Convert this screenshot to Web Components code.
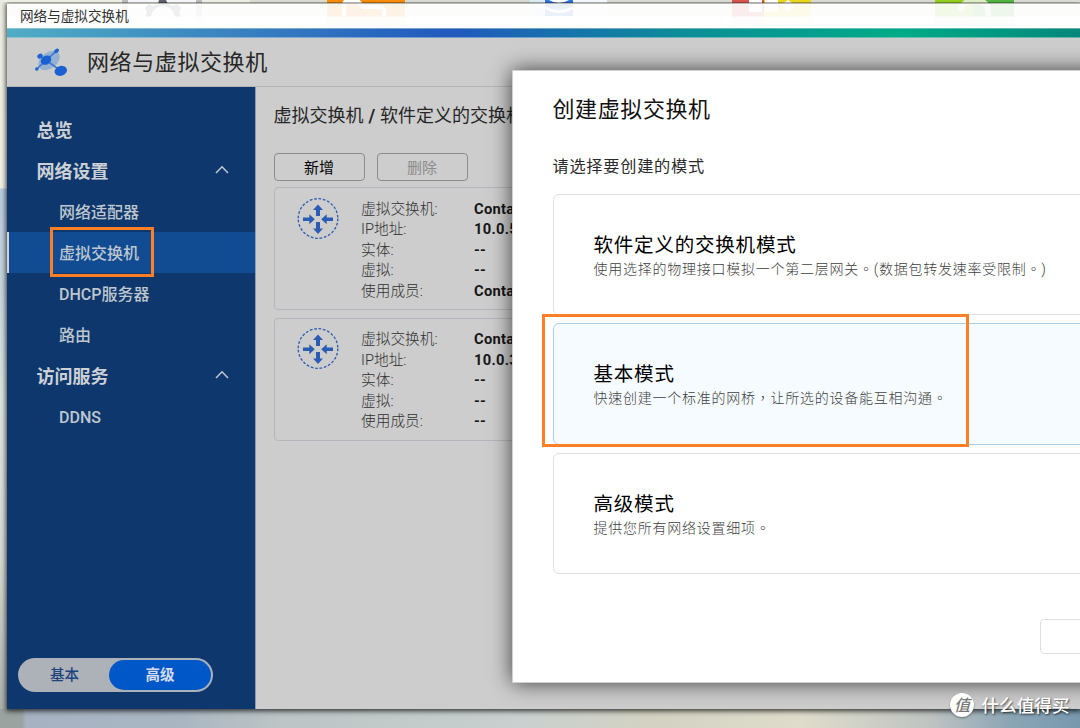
<!DOCTYPE html>
<html lang="zh-CN">
<head>
<meta charset="utf-8">
<title>网络与虚拟交换机</title>
<style>
  html, body {
    margin: 0;
    width: 1080px;
    height: 728px;
    overflow: hidden;
  }

  body {
    font-family: Roboto, "Noto Sans CJK SC", sans-serif;
  }
</style>
</head>
<body>
<nas-desktop>
  <app-window heading="网络与虚拟交换机">
    <side-nav slot="nav">
      <nav-item level="1">总览</nav-item>
      <nav-item level="1" open>网络设置</nav-item>
      <nav-item>网络适配器</nav-item>
      <nav-item active>虚拟交换机</nav-item>
      <nav-item>DHCP服务器</nav-item>
      <nav-item>路由</nav-item>
      <nav-item level="1" open>访问服务</nav-item>
      <nav-item>DDNS</nav-item>
      <mode-toggle slot="footer"></mode-toggle>
    </side-nav>
    <switch-list>
      <ui-button slot="actions">新增</ui-button>
      <ui-button slot="actions" disabled>删除</ui-button>
      <switch-card name="Container" ip="10.0.5.1" member="Container"></switch-card>
      <switch-card name="Container" ip="10.0.3.1" member="--"></switch-card>
    </switch-list>
  </app-window>
  <create-dialog lang="zh-TW" heading="创建虚拟交换机" hint="请选择要创建的模式">
    <mode-card heading="软件定义的交换机模式">使用选择的物理接口模拟一个第二层网关。(数据包转发速率受限制。)</mode-card>
    <mode-card heading="基本模式" selected>快速创建一个标准的网桥，让所选的设备能互相沟通。</mode-card>
    <mode-card heading="高级模式">提供您所有网络设置细项。</mode-card>
  </create-dialog>
  <mark-box style="left:50px;top:227px;width:104px;height:50px"></mark-box>
  <mark-box style="left:542px;top:314px;width:427px;height:133px"></mark-box>
  <site-badge></site-badge>
</nas-desktop>

<script>
// small helper: every element renders its template once into an open root
class BaseElement extends HTMLElement {
  constructor() {
    super();
    this.attachShadow({ mode: "open" });
  }

  connectedCallback() {
    this.shadowRoot.innerHTML = this.render();
  }

  attr(name) {
    return this.getAttribute(name) || "";
  }
}

class NasDesktop extends BaseElement {
  render() {
    return `
      <style>
        :host {
          display: block;
          position: relative;
          box-sizing: border-box;
          width: 1080px;
          height: 728px;
          padding: 3px 0 19px 7px;
          overflow: hidden;
          background:
            linear-gradient(90deg, #9aa39f 0, #9aa39f 22px, #a6b2c2 26px, #a9b6c2 180px, #bcc4c5 280px, #c9d0cf 520px, #d3d2c2 650px, #dfdccb 800px, #bfc4c2 930px, #8ba5b5 1010px, #7898ae 1080px) 0 709px / 100% 19px no-repeat,
            linear-gradient(180deg, #ecece2 0, #f1f1e7 188px, #b9cce0 189px, #c6d4de 280px, #dbe5e2 400px, #d2dbd4 560px, #a9b3ac 709px);
        }

        .icons {
          position: absolute;
          left: 0;
          top: 0;
        }
      </style>
      <svg class="icons" width="1080" height="30" viewBox="0 0 1080 30">
        <rect x="250" width="830" height="4" fill="#d9dbd3"/>
        <g>
          <rect x="122" width="80" height="28" fill="#b9bbbb"/>
          <rect x="128" width="68" height="28" fill="#f5f6f7"/>
          <path d="M159 0h7l2 4 5 2 4-2 4 4-2 5 2 3-6 2a11 11 0 0 0-24 0l-6-2 2-3-2-5 4-4 4 2 5-2z" fill="#5a606b"/>
        </g>
        <rect x="327" width="78" height="26" fill="#f78b0b"/>
        <path d="M344 16V5q0-4 4-4h10l5 6h17q4 0 4 4v5" fill="none" stroke="#fff" stroke-width="4"/>
        <rect x="530" width="77" height="26" fill="#f4f8fd"/>
        <rect x="530" width="14" height="26" fill="#d8ebf1"/>
        <path d="M545 0h28v16h-28z" fill="#2f73e0"/>
        <path d="M549 0h20q-10 6-20 0zM545 6q14 8 28 0v3q-14 8-28 0z" fill="#fff"/>
        <rect x="732" width="32" height="24" fill="#d9534f"/>
        <rect x="764" width="47" height="24" fill="#ead61c"/>
        <path d="M749 0h13v12h-13zM765 0h13v12h-13zM781 5l7-5 7 5-7 8z" fill="#fff"/>
        <rect x="935" width="38" height="24" fill="#94ce1c"/>
        <rect x="973" width="41" height="24" fill="#51b441"/>
        <path d="M960 11q4-11 16-11 14 2 12 16" fill="none" stroke="#dcedc8" stroke-width="6"/>
      </svg>
      <slot></slot>`;
  }
}

class AppWindow extends BaseElement {
  render() {
    return `
      <style>
        :host {
          position: relative;
          display: flex;
          flex-direction: column;
          box-sizing: border-box;
          height: 706px;
          box-shadow: 0 1px 5px 1px rgba(0, 0, 0, .75);
          clip-path: inset(-1px -10px -20px -10px);
        }

        .title {
          box-sizing: border-box;
          height: 25px;
          padding-left: 13px;
          border-top: 1px solid #b9b9b4;
          font-size: 13.6px;
          line-height: 25px;
          color: #303030;
          background: linear-gradient(180deg, rgba(254, 254, 254, .9) 0, rgba(254, 254, 254, .9) 12px, rgba(255, 255, 255, .985) 13px);
        }

        .stripe {
          box-sizing: border-box;
          height: 10px;
          border: solid rgba(205, 220, 225, .5);
          border-width: 1px 0;
          background: linear-gradient(90deg, #50adc4 0, #2159bd 445px, #0b9096 690px, #00ab87 893px, #00877b 1073px) border-box;
        }

        header {
          display: flex;
          align-items: center;
          box-sizing: border-box;
          height: 49px;
          padding-left: 26px;
          border-bottom: 1px solid #b3b3b3;
          background: #cdcdcd;
        }

        h1 {
          margin: 2px 0 0 18px;
          font-size: 22px;
          font-weight: 400;
          letter-spacing: .6px;
          line-height: 46px;
          color: #262626;
        }

        .body {
          display: flex;
          flex: 1;
          min-height: 0;
          background: #cdcdcd;
        }
      </style>
      <div class="title">${this.attr("heading")}</div>
      <div class="stripe"></div>
      <header>
        <svg width="36" height="30" viewBox="0 0 36 30">
          <ellipse cx="16" cy="13.500" rx="12" ry="8" transform="rotate(-38 16 13.500)" fill="#94b0d2"/>
          <path d="M23.700 3.700L3.700 22M7 9l6 4 15 11" fill="none" stroke="#3f79d0" stroke-width="1.600"/>
          <ellipse cx="13" cy="13.200" rx="5.600" ry="4.300" transform="rotate(-30 13 13.200)" fill="#1a60d2"/>
          <ellipse cx="7" cy="9.200" rx="2.900" ry="2.300" transform="rotate(-35 7 9.200)" fill="#1f63d2"/>
          <ellipse cx="23.600" cy="3.900" rx="2.700" ry="1.900" transform="rotate(-35 23.600 3.900)" fill="#1f63d2"/>
          <circle cx="3.800" cy="22" r="1.800" fill="#1f63d2"/>
          <ellipse cx="27.800" cy="23.900" rx="6.300" ry="4.900" transform="rotate(-18 27.800 23.900)" fill="#1a60d2"/>
        </svg>
        <h1>${this.attr("heading")}</h1>
      </header>
      <div class="body">
        <slot name="nav"></slot>
        <slot></slot>
      </div>`;
  }
}

class SideNav extends BaseElement {
  render() {
    return `
      <style>
        :host {
          display: flex;
          flex-direction: column;
          justify-content: space-between;
          box-sizing: border-box;
          width: 249px;
          padding: 22px 0 17px;
          border-right: 1px solid #8b9bb3;
          background: #0e386d;
        }
      </style>
      <nav><slot></slot></nav>
      <slot name="footer"></slot>`;
  }
}

class NavItem extends BaseElement {
  render() {
    const arrow = this.hasAttribute("open")
      ? `<svg width="14" height="9" viewBox="0 0 14 9"><path d="M1 8l6-6.200L13 8" fill="none" stroke="#c3cad3" stroke-width="1.500"/></svg>`
      : "";
    return `
      <style>
        :host {
          display: flex;
          align-items: center;
          justify-content: space-between;
          box-sizing: border-box;
          height: 41px;
          padding: 2px 26px 0 52px;
          font-size: 16px;
          font-weight: 500;
          line-height: 39px;
          color: #bfc6ce;
        }

        :host([level="1"]) {
          padding-left: 29.500px;
          font-size: 18px;
          font-weight: 600;
          color: #cdd0d4;
        }

        :host([active]) {
          border-left: 2px solid #cfd3d8;
          padding-left: 50px;
          background: #114c93;
        }

        svg {
          margin-bottom: 4px;
        }
      </style>
      <span><slot></slot></span>${arrow}`;
  }
}

class ModeToggle extends BaseElement {
  render() {
    return `
      <style>
        :host {
          display: flex;
          box-sizing: border-box;
          width: 195px;
          height: 34px;
          margin-left: 11px;
          padding: 2px;
          border-radius: 17px;
          background: #adb1b8;
          font-size: 14.500px;
          line-height: 32px;
          text-align: center;
        }

        span {
          flex: 1;
          height: 30px;
          color: #1b447c;
          font-weight: 500;
        }

        .on {
          flex: 0 0 102px;
          border-radius: 15px;
          background: #0057c8;
          color: #d4dcea;
          font-weight: 600;
        }
      </style>
      <span>基本</span><span class="on">高级</span>`;
  }
}

class UiButton extends BaseElement {
  render() {
    return `
      <style>
        :host {
          display: block;
          box-sizing: border-box;
          width: 91px;
          height: 28px;
          border: 1px solid #8c8c8c;
          border-radius: 4px;
          font-size: 15px;
          line-height: 28px;
          text-align: center;
          color: #000;
        }

        :host([disabled]) {
          color: #8c8c8c;
        }
      </style>
      <slot></slot>`;
  }
}

class SwitchList extends BaseElement {
  render() {
    return `
      <style>
        :host {
          display: block;
          flex: 1;
          padding: 14px 0 0 17.500px;
          background: #cdcdcd;
        }

        h2 {
          margin: 0;
          font-size: 18px;
          font-weight: 400;
          line-height: 30px;
          white-space: nowrap;
          color: #262626;
        }

        b {
          margin: 0 .5px;
          font-weight: 700;
        }

        .actions {
          display: flex;
          gap: 12px;
          margin: 22px 0 6px;
        }

        .cards {
          display: flex;
          flex-direction: column;
          gap: 7.500px;
        }
      </style>
      <h2>虚拟交换机 <b>/</b> 软件定义的交换机</h2>
      <div class="actions"><slot name="actions"></slot></div>
      <div class="cards"><slot></slot></div>`;
  }
}

class SwitchCard extends BaseElement {
  render() {
    const rows = [
      ["虚拟交换机:", this.attr("name")],
      ["IP地址:", this.attr("ip")],
      ["实体:", "--"],
      ["虚拟:", "--"],
      ["使用成员:", this.attr("member")]
    ];
    return `
      <style>
        :host {
          display: flex;
          align-items: flex-start;
          box-sizing: border-box;
          width: 700px;
          height: 123px;
          padding: 9.500px 0 0 22px;
          border: 1px solid #b5b6bd;
          border-radius: 4px;
        }

        svg {
          flex: none;
          margin-right: 22.500px;
        }

        dl {
          display: grid;
          grid-template-columns: 113px auto;
          grid-auto-rows: 20.600px;
          margin: 1px 0 0;
          font-size: 14.700px;
          line-height: 21px;
        }

        dt {
          font-weight: 300;
          color: #303030;
        }

        dd {
          margin: 0;
          font-weight: 700;
          letter-spacing: .3px;
          color: #161616;
        }
      </style>
      <svg width="42" height="42" viewBox="0 0 42 42" fill="#2b5cb4">
        <circle cx="21" cy="20.500" r="19.800" fill="none" stroke="#2b5cb4" stroke-width="1.300" stroke-dasharray="2.700 1.740"/>
        <path d="M21 6.500l5 5.500h-3v6h-4v-6h-3z"/>
        <path d="M21 36l5-5.500h-3v-6.500h-4v6.500h-3z"/>
        <path d="M17.800 21.300l-5.500-5v3.200h-6.300v3.600h6.300v3.200z"/>
        <path d="M24.200 21.300l5.500-5v3.200h6.300v3.600h-6.300v3.200z"/>
      </svg>
      <dl>${rows.map(([k, v]) => `<dt>${k}</dt><dd>${v}</dd>`).join("")}</dl>`;
  }
}

class CreateDialog extends BaseElement {
  render() {
    return `
      <style>
        :host {
          position: absolute;
          left: 512px;
          top: 70px;
          display: flex;
          flex-direction: column;
          box-sizing: border-box;
          width: 700px;
          height: 613px;
          padding: 21px 0 28px 39.500px;
          border: 1px solid #d0d0d0;
          background: #fff;
          box-shadow: 0 0 20px rgba(0, 0, 0, .7);
          font-family: Roboto, "Noto Sans CJK TC", sans-serif;
        }

        h2 {
          margin: 0;
          font-size: 22px;
          font-weight: 400;
          letter-spacing: .6px;
          line-height: 36px;
          color: #111;
        }

        p {
          margin: 27px 0 15px;
          font-size: 16.200px;
          letter-spacing: .75px;
          line-height: 24px;
          color: #2b2b2b;
        }

        .modes {
          display: flex;
          flex-direction: column;
          gap: 8px;
          flex: 1;
        }

        .cancel {
          box-sizing: border-box;
          width: 110px;
          height: 35px;
          margin-left: 487.500px;
          border: 1px solid #dcdfe6;
          border-radius: 4px;
        }
      </style>
      <h2>${this.attr("heading")}</h2>
      <p>${this.attr("hint")}</p>
      <div class="modes"><slot></slot></div>
      <div class="cancel"></div>`;
  }
}

class ModeCard extends BaseElement {
  render() {
    return `
      <style>
        :host {
          display: block;
          box-sizing: border-box;
          height: 121.300px;
          padding: 37px 0 0 40px;
          border: 1px solid #dcdfe5;
          border-radius: 6px;
          white-space: nowrap;
        }

        :host([selected]) {
          border-color: #abcdea;
          background: #f6fbff;
        }

        h3 {
          margin: 0;
          font-size: 19.500px;
          font-weight: 400;
          letter-spacing: .8px;
          line-height: 27px;
          color: #000;
        }

        p {
          margin: -1px 0 0;
          font-size: 14px;
          font-weight: 300;
          letter-spacing: .75px;
          line-height: 22px;
          color: #404040;
        }
      </style>
      <h3>${this.attr("heading")}</h3>
      <p><slot></slot></p>`;
  }
}

class MarkBox extends BaseElement {
  render() {
    return `
      <style>
        :host {
          display: block;
          position: absolute;
          box-sizing: border-box;
          border: 3px solid #ff7f27;
        }
      </style>`;
  }
}

class SiteBadge extends BaseElement {
  render() {
    return `
      <style>
        :host {
          position: absolute;
          left: 950px;
          top: 693px;
          display: flex;
          align-items: center;
          gap: 8px;
          font: 500 17.600px/24px "Noto Sans CJK SC", sans-serif;
          color: #fff;
          white-space: nowrap;
          text-shadow: 1px 1px 2px rgba(0, 0, 0, .6);
        }

        i {
          width: 24px;
          height: 24px;
          border-radius: 50%;
          background: #fff;
          font-size: 16px;
          line-height: 23px;
          text-align: center;
          text-shadow: none;
          color: #777;
          box-shadow: 0 1px 2px rgba(0, 0, 0, .4);
        }

        span {
          line-height: 22px;
          margin: -1px 0 0 -.5px;
        }
      </style>
      <i>值</i><span>什么值得买</span>`;
  }
}

customElements.define("nas-desktop", NasDesktop);
customElements.define("app-window", AppWindow);
customElements.define("side-nav", SideNav);
customElements.define("nav-item", NavItem);
customElements.define("mode-toggle", ModeToggle);
customElements.define("ui-button", UiButton);
customElements.define("switch-list", SwitchList);
customElements.define("switch-card", SwitchCard);
customElements.define("create-dialog", CreateDialog);
customElements.define("mode-card", ModeCard);
customElements.define("mark-box", MarkBox);
customElements.define("site-badge", SiteBadge);
</script>
</body>
</html>
